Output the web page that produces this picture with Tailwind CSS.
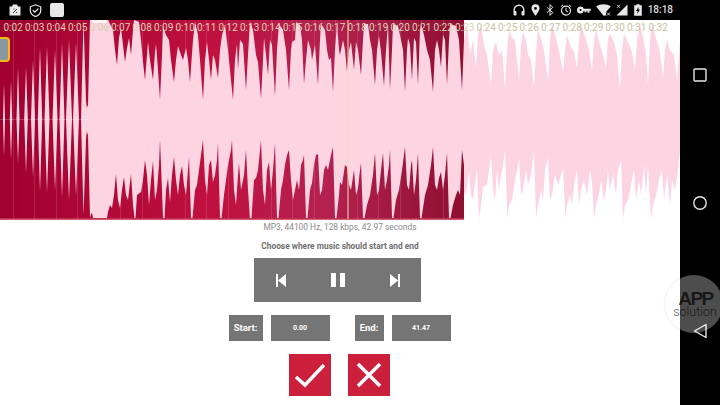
<!DOCTYPE html>
<html lang="en">
<head>
  <meta charset="UTF-8" />
  <meta name="viewport" content="width=device-width, initial-scale=1.0" />
  <title>Music cutter</title>
  <script src="https://cdn.jsdelivr.net/npm/@tailwindcss/browser@4"></script>
</head>
<body class="w-[720px] h-[405px] overflow-hidden bg-white font-['Roboto',sans-serif]">
  <div class="relative flex flex-col w-[720px] h-[405px]">

    <!-- Status bar -->
    <div class="flex items-center justify-between h-5 bg-black pl-[9px] pr-[47px]">
      <div class="flex items-center gap-2">
        <svg class="w-3 h-3" viewBox="0 0 12 12"><path fill="#e8e8e8" d="M4 0.5h4l1 2h2.5v9H0.5v-9H3z"/><path stroke="#333" stroke-width="1" d="M4 9l4-4M4.5 5h1M7 8.5h1"/></svg>
        <svg class="w-[13px] h-[13px]" viewBox="0 0 13 13"><path fill="none" stroke="#e8e8e8" stroke-width="1.2" d="M6.5 0.8l5.2 2v4c0 3-2.6 4.8-5.2 5.8-2.6-1-5.2-2.8-5.2-5.8v-4z"/><path fill="none" stroke="#e8e8e8" stroke-width="1.3" d="M3.8 6.2l2 2 3.6-3.6"/></svg>
        <div class="w-[14px] h-[14px] rounded-[2px] bg-[#e8e8e8]"></div>
      </div>
      <div class="flex items-center">
        <svg class="w-3 h-3 mr-[6px]" viewBox="0 0 12 12"><path fill="none" stroke="#e8e8e8" stroke-width="1.4" d="M1.2 8V6a4.8 4.8 0 0 1 9.6 0v2"/><rect x="0.5" y="7" width="3" height="4.5" rx="1" fill="#e8e8e8"/><rect x="8.5" y="7" width="3" height="4.5" rx="1" fill="#e8e8e8"/></svg>
        <svg class="w-[9px] h-3 mr-[6px]" viewBox="0 0 9 12"><path fill="#e8e8e8" fill-rule="evenodd" d="M4.5 0.3a4 4 0 0 1 4 4c0 2.7-4 7.4-4 7.4s-4-4.7-4-7.4a4 4 0 0 1 4-4zM4.5 3a1.4 1.4 0 1 0 0 2.8 1.4 1.4 0 0 0 0-2.8z"/></svg>
        <svg class="w-2 h-3 mr-[6px]" viewBox="0 0 8 12"><path fill="none" stroke="#e8e8e8" stroke-width="1" d="M0.8 3.2l6 5.4-2.8 2.8V0.6l2.8 2.8-6 5.4"/></svg>
        <svg class="w-3 h-3 mr-[5px]" viewBox="0 0 12 12"><circle cx="6" cy="6.6" r="4.5" fill="none" stroke="#e8e8e8" stroke-width="1.2"/><path fill="none" stroke="#e8e8e8" stroke-width="1" d="M6 3.8v3l2 1.2M0.8 2.8l2.2-2M11.2 2.8l-2.2-2"/></svg>
        <svg class="w-[14px] h-2 mr-[5px]" viewBox="0 0 14 8"><path fill="#e8e8e8" fill-rule="evenodd" d="M3.5 0.5a3.5 3.5 0 0 1 3.3 2.3h7v2h-1.3v2h-2v-2h-1v1.4h-2v-1.4H6.8a3.5 3.5 0 1 1-3.3-4.3zM3.5 3a1 1 0 1 0 0 2 1 1 0 0 0 0-2z"/></svg>
        <svg class="w-[15px] h-3 mr-[5px]" viewBox="0 0 15 12"><path fill="#e8e8e8" d="M0.2 2.6C4 -0.4 11 -0.4 14.8 2.6L10 8v3.6H9L7.5 11.8z"/><path stroke="#e8e8e8" stroke-width="0.9" d="M11 8.5l3 3M14 8.5l-3 3"/></svg>
        <svg class="w-3 h-3 mr-[6px]" viewBox="0 0 12 12"><path fill="#e8e8e8" d="M11.5 0.5v11H0.5z"/><path stroke="#e8e8e8" stroke-width="0.9" d="M1 0.8l3 3M4 0.8l-3 3"/></svg>
        <svg class="w-2 h-3 mr-[6px]" viewBox="0 0 8 12"><path fill="#e8e8e8" d="M2.5 0.3h3v1H7.8v10.5H0.2V1.3h2.3z"/><path fill="#111" d="M4.6 2.8L2 7h1.6l-0.4 3 2.8-4.4H4.4z"/></svg>
        <span class="text-[10px] leading-none font-medium text-[#dddddd]">18:18</span>
      </div>
    </div>

    <div class="flex flex-1">
      <!-- Editor -->
      <div class="flex flex-col items-center w-[680px]">

        <!-- Waveform -->
        <div class="relative w-[680px] h-[200px] shrink-0">
          <svg class="block w-[680px] h-[200px]" viewBox="0 20 680 200">
            <defs>
              <linearGradient id="sel" x1="0" y1="0" x2="1" y2="0">
                <stop offset="0" stop-color="#a0002e"/>
                <stop offset="0.45" stop-color="#c0103f"/>
                <stop offset="0.7" stop-color="#b52150"/>
                <stop offset="1" stop-color="#8e0f31"/>
              </linearGradient>
            </defs>
            <rect x="0" y="20" width="464" height="199.500" fill="url(#sel)"/>
            <rect x="0" y="218" width="464" height="1.500" fill="#c42f50"/>

            <!-- second ticks, only seen on the red -->
            <path stroke="#ffffff" stroke-opacity="0.12" stroke-width="1" d="M13.500 20V219M34.500 20V219M56.500 20V219M77.500 20V219M99.500 20V219M120.500 20V219M142.500 20V219M163.500 20V219M185.500 20V219M206.500 20V219M228.500 20V219M249.500 20V219M271.500 20V219M292.500 20V219M314.500 20V219M335.500 20V219M357.500 20V219M378.500 20V219M400.500 20V219M421.500 20V219M443.500 20V219"/>

            <!-- left part: thin spikes -->
            <g fill="#fdd5e2">
              <polygon points="4,83 5,119 4,157 3,119"/>
              <polygon points="11,80 12.200,119 11,160 9.800,119"/>
              <polygon points="18,67 19.500,119 18,163 16.500,119"/>
              <polygon points="26,67 27.800,119 26,173 24.200,119"/>
              <polygon points="33,60 35,119 33,177 31,119"/>
              <polygon points="40,47 42.200,119 40,192 37.800,119"/>
              <polygon points="47,47 49.500,119 47,192 44.500,119"/>
              <polygon points="55,50 57.500,119 55,190 52.500,119"/>
              <polygon points="62,43 64.500,119 62,197 59.500,119"/>
              <polygon points="69,40 72,119 69,200 66,119"/>
              <polygon points="76,43 79,119 76,195 73,119"/>
              <polygon points="83.500,20 86,100 88,119 86,140 83.500,215 81,119"/>
            </g>

            <!-- top envelope -->
            <polygon fill="#fdd5e2" points="82,119 88,105 90,20 108,20 113,30 115,50 117,65 119,38 121,28 123,45 125,62 127,48 129,38 131,55 133,30 134,20 139,22 141,40 143,62 145,80 147,55 148,42 150,60 153,80 155,52 156,44 158,70 160,100 162,55 163,26 166,35 169,40 171,60 174,82 176,60 178,46 181,55 183,60 186,48 188,60 190,82 193,40 195,22 198,35 200,60 203,100 205,60 207,42 209,60 211,80 213,55 215,60 218,78 220,50 222,35 225,25 228,50 230,70 233,100 235,60 237,44 238,70 240,40 243,44 246,90 248,55 250,22 253,30 256,55 258,62 261,99 263,60 264,38 266,55 268,75 270,40 272,45 275,96 277,50 279,24 283,30 286,50 289,90 291,50 292,42 295,40 296,22 300,25 302,40 304,84 306,60 308,40 311,50 312,60 315,45 318,85 320,40 321,24 325,30 327,50 329,60 331,58 333,92 335,50 337,24 339,50 340,55 343,40 345,50 347,72 349,50 351,42 354,70 356,42 358,50 361,75 363,40 364,24 368,24 370,40 372,50 375,85 377,50 379,36 381,52 384,86 386,50 388,24 390,90 392,50 393,24 398,26 401,40 403,50 405,92 407,50 408,38 410,45 412,80 414,38 416,42 418,85 420,30 421,24 424,35 427,50 430,60 433,92 435,50 437,40 439,50 441,67 443,35 445,40 447,85 449,40 450,24 456,26 459,40 462,90 464,40 467,24 470,55 473,40 476,68 478,35 481,26 484,45 487,55 491,85 493,50 496,42 499,55 502,50 505,88 507,50 509,30 512,38 515,40 519,80 521,45 523,32 526,40 528,55 531,60 534,88 536,52 538,30 541,38 544,50 548,82 550,40 552,24 556,38 560,55 563,73 565,50 567,35 570,45 574,52 577,68 579,40 581,24 585,36 589,50 592,70 594,40 596,30 600,45 603,55 606,68 608,38 610,34 614,42 617,55 620,90 622,50 624,34 628,42 632,52 635,70 637,40 640,24 644,42 646,55 648,85 650,40 652,24 656,38 660,52 663,78 665,50 667,40 670,50 674,55 677,80 680,40 680,119"/>

            <!-- bottom envelope -->
            <polygon fill="#fdd5e2" points="82,119 88,135 90,218 91,214 92,213 93,218 107,218 108,212 110,205 112,208 114,195 116,174 118,200 120,208 122,190 124,177 126,195 128,200 131,174 133,205 134.500,218 135.500,218 137,195 141,192 143,180 145,160 147,175 149,205 151,180 153,161 155,200 157,190 159,165 160,140 162,190 163,218 164.500,218 166,190 168,178 170,202 172,175 174,157 176,180 178,195 180,175 182,166 184,185 186,195 188,170 189,157 191,218 192.500,218 195,190 197,185 199,170 201,155 203,140 205,180 207,195 209,165 211,160 213,182 215,175 217,160 218,143 220,218 221.500,218 224,195 226,180 228,165 231,150 232,140 234,190 236,205 238,175 239,163 241,190 244,175 246,150 248,190 250,218 251.500,218 254,180 256,178 258,170 260,150 261,140 263,190 265,205 267,170 269,162 271,190 273,170 275,143 277,218 278.500,218 281,190 283,180 285,165 287,155 289,150 291,180 293,200 295,190 297,180 299,190 301,165 303,160 304,155 306,218 307.500,218 310,190 312,183 314,165 316,155 318,154 320,195 322,190 324,170 326,165 328,170 331,155 333,147 335,218 336.500,218 339,195 340,182 342,185 345,165 347,167 349,185 351,190 354,170 356,195 358,188 360,170 361,163 363,218 364.500,218 367,205 370,195 373,175 375,153 377,195 379,190 381,170 383,153 385,190 387,180 389,165 390,150 392,218 393.500,218 396,200 399,190 402,170 405,147 407,185 409,190 411,165 412,160 414,195 416,180 418,153 420,218 421.500,218 425,195 428,185 431,165 433,147 435,185 437,190 439,178 441,172 443,190 445,175 447,153 449,218 450.500,218 453,205 456,195 458,190 460,195 462,150 464,165 464,192 466,195 469,172 471,195 473,200 477,168 479,219 481,205 483,187 487,185 489,170 491,155 493,190 495,200 497,170 499,190 501,175 503,165 505,150 507.500,219 509,205 512,200 515,180 517,170 519,158 521,195 523,190 526,170 528,185 531,175 534,150 536,219 538,205 541,190 543,200 545,170 548,158 550,200 552,195 555,175 558,185 561,175 563,168 565.500,219 567,205 570,195 572,205 574,185 577,170 579,205 581,190 584,180 587,195 590,170 592,182 594,219 596,205 599,195 601,180 604,200 606,190 608,170 610,190 613,175 616,195 618,170 621,160 623,219 625,205 628,200 631,185 634,170 636,200 639,180 641,195 644,165 646,195 648,165 651,219 653,205 656,195 659,180 662,170 664,200 667,175 670,205 672,180 675,190 678,170 680,150 680,119"/>

            <!-- centre line and playhead -->
            <path d="M0 119.500H90" stroke="#ffffff" stroke-opacity="0.2" stroke-width="1"/>
            <path d="M348 20V219" stroke="#f6dcae" stroke-width="1"/>
            <rect x="93" y="20" width="14" height="3" fill="#ffffff" fill-opacity="0.7"/>
          </svg>

          <!-- Time labels -->
          <div class="absolute top-0 left-[3.500px] flex h-[15px] items-center text-[10px] leading-none text-[#d9d2b0] whitespace-nowrap">
            <span class="w-[21.500px]">0:02</span><span class="w-[21.500px]">0:03</span><span class="w-[21.500px]">0:04</span><span class="w-[21.500px]">0:05</span><span class="w-[21.500px]">0:06</span><span class="w-[21.500px]">0:07</span><span class="w-[21.500px]">0:08</span><span class="w-[21.500px]">0:09</span><span class="w-[21.500px]">0:10</span><span class="w-[21.500px]">0:11</span><span class="w-[21.500px]">0:12</span><span class="w-[21.500px]">0:13</span><span class="w-[21.500px]">0:14</span><span class="w-[21.500px]">0:15</span><span class="w-[21.500px]">0:16</span><span class="w-[21.500px]">0:17</span><span class="w-[21.500px]">0:18</span><span class="w-[21.500px]">0:19</span><span class="w-[21.500px]">0:20</span><span class="w-[21.500px]">0:21</span><span class="w-[21.500px]">0:22</span><span class="w-[21.500px]">0:23</span><span class="w-[21.500px] text-[#c6c2a0]">0:24</span><span class="w-[21.500px] text-[#c6c2a0]">0:25</span><span class="w-[21.500px] text-[#c6c2a0]">0:26</span><span class="w-[21.500px] text-[#c6c2a0]">0:27</span><span class="w-[21.500px] text-[#c6c2a0]">0:28</span><span class="w-[21.500px] text-[#c6c2a0]">0:29</span><span class="w-[21.500px] text-[#c6c2a0]">0:30</span><span class="w-[21.500px] text-[#c6c2a0]">0:31</span><span class="w-[21.500px] text-[#c6c2a0]">0:32</span>
          </div>

          <!-- Start handle -->
          <div class="absolute left-[-6px] top-[17px] w-4 h-[25px] rounded-[4px] border-2 border-[#fcb813] bg-[#8a96a0]"></div>
        </div>

        <p class="mt-[1px] text-[8.400px] leading-[12px] text-[#8a8a8a]">MP3, 44100 Hz, 128 kbps, 42.97 seconds</p>
        <p class="mt-[7px] text-[8.400px] leading-[12px] font-bold text-[#707070]">Choose where music should start and end</p>

        <!-- Player controls -->
        <div class="flex items-center justify-between mt-[6px] w-[167px] h-[44px] pl-[21px] pr-[20px] bg-[#757575] ml-[-5px]">
          <svg class="w-[12px] h-[13px]" viewBox="0 0 12 13"><path fill="#ffffff" d="M1 0h2v13H1zM11 0v13L3 6.500z"/></svg>
          <svg class="w-[14px] h-[14px]" viewBox="0 0 14 14"><path fill="#ffffff" d="M0 0h5v14H0zM9 0h5v14H9z"/></svg>
          <svg class="w-[12px] h-[13px]" viewBox="0 0 12 13"><path fill="#ffffff" d="M9 0h2v13H9zM1 0v13l8-6.500z"/></svg>
        </div>

        <!-- Start / end -->
        <div class="flex items-center mt-[13px] h-[26px] ml-[-1px] text-white">
          <div class="flex items-center justify-center w-[34px] h-[26px] bg-[#757575] text-[9.500px] font-bold">Start:</div>
          <div class="flex items-center justify-center w-[59px] h-[26px] ml-2 bg-[#757575] text-[7px] font-bold">0.00</div>
          <div class="flex items-center justify-center w-[29px] h-[26px] ml-[25px] bg-[#757575] text-[9.500px] font-bold">End:</div>
          <div class="flex items-center justify-center w-[59px] h-[26px] ml-2 bg-[#757575] text-[7px] font-bold">41.47</div>
        </div>

        <!-- Confirm / cancel -->
        <div class="flex gap-[17px] mt-[13px] ml-[-1px]">
          <button class="flex items-center justify-center w-[42px] h-[42px] bg-[#cb1f3c]">
            <svg class="w-[32px] h-[26px]" viewBox="0 0 32 26"><path fill="none" stroke="#ffffff" stroke-width="3.500" d="M2 15l9 8L30 3"/></svg>
          </button>
          <button class="flex items-center justify-center w-[42px] h-[42px] bg-[#cb1f3c]">
            <svg class="w-[26px] h-[26px]" viewBox="0 0 26 26"><path fill="none" stroke="#ffffff" stroke-width="3.500" d="M2 2l22 22M24 2L2 24"/></svg>
          </button>
        </div>
      </div>

      <!-- Nav bar -->
      <div class="flex flex-col items-center w-10 bg-black pt-[48px] gap-[113.500px]">
        <svg class="w-[14px] h-[14px] ml-[-1px]" viewBox="0 0 14 14"><rect x="1" y="1" width="12" height="12" rx="1" fill="none" stroke="#e8e8e8" stroke-width="1.400"/></svg>
        <svg class="w-[14px] h-[14px] ml-[-1px]" viewBox="0 0 14 14"><circle cx="7" cy="7" r="6.200" fill="none" stroke="#e8e8e8" stroke-width="1.400"/></svg>
        <svg class="w-[14px] h-[16px] ml-[-1px]" viewBox="0 0 14 16"><path fill="none" stroke="#e8e8e8" stroke-width="1.400" stroke-linejoin="round" d="M13 1.500v13L1.500 8z"/></svg>
      </div>
    </div>

    <!-- Watermark -->
    <div class="absolute left-[665px] top-[275px] flex flex-col items-center w-[58px] h-[58px] pt-[16px] rounded-full bg-white/30 shadow-[0_0_3px_rgba(0,0,0,0.12)] text-black/70">
      <span class="text-[19px] leading-[16px] font-bold tracking-[-1.500px] font-['Liberation_Sans',sans-serif] ml-[3px]">APP</span>
      <span class="text-[12.500px] leading-[10px] font-light ml-[2px]">solution</span>
    </div>
  </div>
</body>
</html>
